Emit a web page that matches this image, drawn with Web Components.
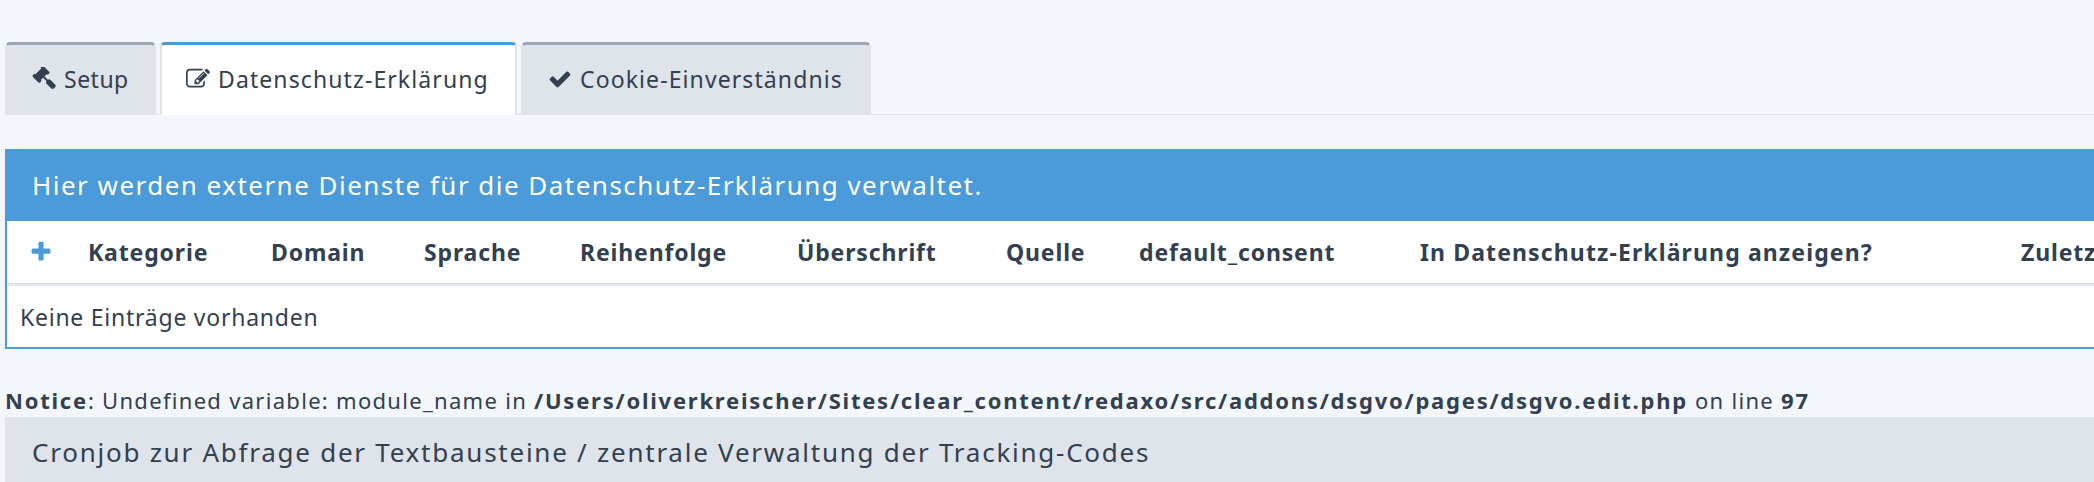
<!DOCTYPE html>
<html lang="de"><head><meta charset="utf-8"><title>DSGVO</title>
<style>
html,body{margin:0;height:482px;overflow:hidden;background:#f3f6fb;color:#324050;font-family:"Noto Sans","DejaVu Sans",sans-serif;}
body{width:2094px;}
</style></head><body>
<dsgvo-page></dsgvo-page>
<template id="t-tab"><style>
:host{display:flex;align-items:center;box-sizing:border-box;height:72px;width:var(--w);padding-left:var(--p);padding-bottom:2px;border:2px solid #dfe3ea;border-bottom:0;border-top:3px solid #9ca5b2;border-radius:5px 5px 0 0;background:#dfe3ea;font-size:23px;gap:8px;white-space:nowrap;letter-spacing:var(--ls,1.1px)}
:host([active]){background:#fff;border-top-color:#4b9ad9;height:73px;margin-bottom:-1px}
::slotted(svg){display:block;flex:none;fill:#324050}
</style><slot name="icon"></slot><slot></slot></template>
<template id="t-tabs"><style>
:host{display:flex;gap:4px;box-sizing:border-box;height:73px;margin:42px 0 0 5px;border-bottom:1px solid #dfe3ea;}
</style><slot></slot></template>
<template id="t-panel"><style>
:host{display:block;margin:34px 0 0 5px;border:2px solid #4b9ad9;border-top:0;border-right:0;background:#fff;box-sizing:border-box;height:200px}
.h{background:#4b9ad9;color:#fff;font-size:26px;letter-spacing:1.47px;display:flex;align-items:center;padding-left:25px;white-space:nowrap;box-sizing:border-box;height:72px}
</style><div class="h"><slot name="title"></slot></div><slot></slot></template>
<template id="t-table"><style>
:host{display:block;overflow:hidden}
.r{display:flex;align-items:center;border-bottom:3px solid #dfe3ea;font-size:23px;font-weight:700;letter-spacing:.85px;white-space:nowrap;height:61px;padding-bottom:1px;box-sizing:content-box}
.r span{flex:none}
svg{display:block;fill:#4b9ad9}
.e{font-size:23px;padding-left:13px;height:61px;display:flex;align-items:center;letter-spacing:.75px}
</style><div class="r">
<span style="width:81px;padding-left:22px;box-sizing:border-box"><svg width="24" height="24" viewBox="0 0 1792 1792"><path d="M1600 736v192q0 40-28 68t-68 28h-416v416q0 40-28 68t-68 28h-192q-40 0-68-28t-28-68v-416h-416q-40 0-68-28t-28-68v-192q0-40 28-68t68-28h416v-416q0-40 28-68t68-28h192q40 0 68 28t28 68v416h416q40 0 68 28t28 68z"/></svg></span>
<span style="width:183px">Kategorie</span><span style="width:153px">Domain</span><span style="width:156px">Sprache</span><span style="width:217px">Reihenfolge</span><span style="width:209px">Überschrift</span><span style="width:133px">Quelle</span><span style="width:281px">default_consent</span><span style="width:601px;letter-spacing:1.12px">In Datenschutz-Erklärung anzeigen?</span><span>Zuletzt</span>
</div><div class="e">Keine Einträge vorhanden</div></template>
<template id="t-notice"><style>
:host{display:block;margin:0 0 0 5px;font-size:22px;height:30px;padding-top:38px;line-height:26px;letter-spacing:1.3px;white-space:nowrap}
::slotted(b){letter-spacing:1.77px}
</style><slot></slot></template>
<template id="t-section"><style>
:host{display:block;margin:0 0 0 5px;background:#dfe3ea;height:65px;font-size:26px;padding:0 0 0 27px;line-height:71px;white-space:nowrap;letter-spacing:1.75px}
</style><slot></slot></template>
<template id="t-page"><dsgvo-tabs>
<dsgvo-tab style="--w:151px;--p:25px;--ls:.5px"><svg slot="icon" width="24" height="24" viewBox="0 0 1792 1792"><path d="M1771 1408q0 53-37 90l-107 108q-39 37-91 37-53 0-90-37l-363-364q-38-36-38-90 0-53 43-96l-256-256-126 126q-14 14-34 14t-34-14q2 2 12.500 12t12.500 13 10 11.500 10 13.500 6 13.500 5.500 16.500 1.500 18q0 38-28 68-3 3-16.500 18t-19 20.500-18.500 16.500-22 15.500-22 9-26 4.500q-40 0-68-28l-408-408q-28-28-28-68 0-13 4.500-26t9-22 15.500-22 16.500-18.500 20.500-19 18-16.500q30-28 68-28 10 0 18 1.500t16.500 5.500 13.500 6 13.500 10 11.500 10 13 12.500 12 12.500q-14-14-14-34t14-34l348-348q14-14 34-14t34 14q-2-2-12.500-12t-12.500-13-10-11.500-10-13.500-6-13.500-5.500-16.500-1.500-18q0-38 28-68 3-3 16.500-18t19-20.500 18.500-16.500 22-15.500 22-9 26-4.500q40 0 68 28l408 408q28 28 28 68 0 13-4.500 26t-9 22-15.500 22-16.500 18.500-20.500 19-18 16.500q-30 28-68 28-10 0-18-1.500t-16.500-5.500-13.500-6-13.500-10-11.500-10-13-12.500-12-12.500q14 14 14 34t-14 34l-126 126 256 256q43-43 96-43 52 0 91 37l363 363q37 39 37 91z"/></svg>Setup</dsgvo-tab>
<dsgvo-tab active style="--w:357px;--p:24px"><svg slot="icon" width="24" height="24" viewBox="0 0 1792 1792"><path d="M888 1184l116-116-152-152-116 116v56h96v96h56zm440-720q-16-16-33 1l-350 350q-17 17-1 33t33-1l350-350q17-17 1-33zm80 594v190q0 119-84.500 203.500t-203.500 84.500h-832q-119 0-203.500-84.500t-84.500-203.500v-832q0-119 84.500-203.500t203.500-84.500h832q63 0 117 25 15 7 18 23 3 17-9 29l-49 49q-14 14-32 8-23-6-45-6h-832q-66 0-113 47t-47 113v832q0 66 47 113t113 47h832q66 0 113-47t47-113v-126q0-13 9-22l64-64q15-15 35-7t20 29zm-96-738l288 288-672 672h-288v-288zm444 132l-92 92-288-288 92-92q28-28 68-28t68 28l152 152q28 28 28 68t-28 68z"/></svg>Datenschutz-Erklärung</dsgvo-tab>
<dsgvo-tab style="--w:350px;--p:25px"><svg slot="icon" width="24" height="24" viewBox="0 0 1792 1792"><path d="M1671 566q0 40-28 68l-724 724-136 136q-28 28-68 28t-68-28l-136-136-362-362q-28-28-28-68t28-68l136-136q28-28 68-28t68 28l294 295 656-657q28-28 68-28t68 28l136 136q28 28 28 68z"/></svg>Cookie-Einverständnis</dsgvo-tab>
</dsgvo-tabs>
<dsgvo-panel><span slot="title">Hier werden externe Dienste für die Datenschutz-Erklärung verwaltet.</span><dsgvo-table></dsgvo-table></dsgvo-panel>
<dsgvo-notice><b>Notice</b>: Undefined variable: module_name in <b>/Users/oliverkreischer/Sites/clear_content/redaxo/src/addons/dsgvo/pages/dsgvo.edit.php</b> on line <b>97</b></dsgvo-notice>
<dsgvo-section>Cronjob zur Abfrage der Textbausteine / zentrale Verwaltung der Tracking-Codes</dsgvo-section></template>
<script>
const def=(n,t)=>customElements.define(n,class extends HTMLElement{constructor(){super();this.attachShadow({mode:"open"}).append(document.getElementById(t).content.cloneNode(true));}});
def("dsgvo-tab","t-tab");def("dsgvo-tabs","t-tabs");def("dsgvo-panel","t-panel");def("dsgvo-table","t-table");def("dsgvo-notice","t-notice");def("dsgvo-section","t-section");
customElements.define("dsgvo-page",class extends HTMLElement{constructor(){super();const s=this.attachShadow({mode:"open"});const st=document.createElement("style");st.textContent=":host{display:block}";s.append(st,document.getElementById("t-page").content.cloneNode(true));}});
</script></body></html>
